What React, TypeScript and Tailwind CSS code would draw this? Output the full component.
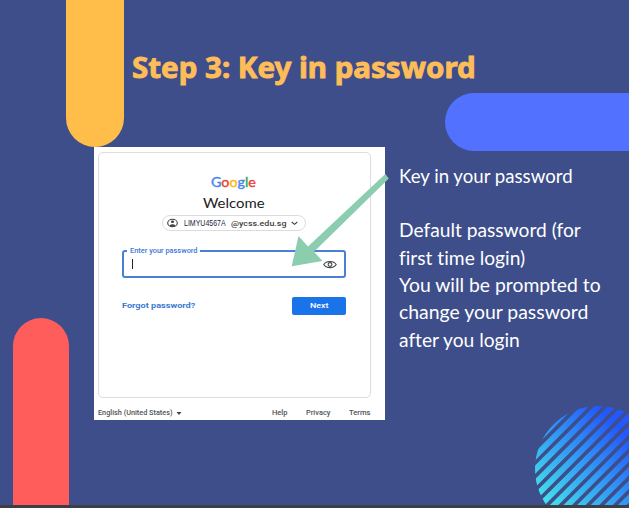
import { useLayoutEffect, useRef, useState } from "react";

type FitProps = { text: string; width: number; className?: string };

// One line of text, stretched horizontally to fill the given width.
function Fit({ text, width, className = "" }: FitProps) {
  const ref = useRef<HTMLSpanElement>(null);
  const [scale, setScale] = useState(1);
  useLayoutEffect(() => {
    if (ref.current) setScale(width / ref.current.offsetWidth);
  }, [width, text]);
  return (
    <span className={`block whitespace-nowrap ${className}`} style={{ width }}>
      <span ref={ref} className="inline-block origin-left" style={{ transform: `scaleX(${scale})` }}>
        {text}
      </span>
    </span>
  );
}

const notes: [string, number][] = [
  ["Key in your password", 174],
  ["", 0],
  ["Default password (for", 182],
  ["first time login)", 126],
  ["You will be prompted to", 202],
  ["change your password", 189],
  ["after you login", 121],
];

function GoogleLogo() {
  return (
    <div className="h-[16px] w-[45px] font-['Lato',sans-serif] text-[14px] leading-[16px] [-webkit-text-stroke:0.4px]">
      <span className="inline-block origin-left scale-x-[1.02] whitespace-nowrap">
        <span className="text-[#4285f4]">G</span>
        <span className="text-[#ea4335]">o</span>
        <span className="text-[#fbbc05]">o</span>
        <span className="text-[#4285f4]">g</span>
        <span className="text-[#34a853]">l</span>
        <span className="text-[#ea4335]">e</span>
      </span>
    </div>
  );
}

function LoginWindow() {
  return (
    <div className="flex h-[273px] w-[291px] flex-col bg-white pl-[4px] pt-[5px] font-['Roboto',sans-serif]">
      <div className="flex h-[246px] w-[273px] flex-col rounded-[5px] border border-[#dcdde0] px-[23px]">
        <div className="mt-[21px] flex justify-center pr-[3px]"><GoogleLogo /></div>
        <div className="mt-[5px] flex justify-center pr-[2px]">
          <Fit text="Welcome" width={62} className="font-['Lato',sans-serif] text-[12.5px] leading-[18px] text-[#202124]" />
        </div>
        <div className="ml-[40px] mt-[2px] flex h-[16px] w-[144px] items-center rounded-full border border-[#dadce0] pl-[4px]">
          <svg className="h-[10px] w-[11px] shrink-0" viewBox="0 0 11 10" fill="none" stroke="#3c4043" strokeWidth="1.1">
            <ellipse cx="5.5" cy="5" rx="4.8" ry="3.8" />
            <ellipse cx="5.5" cy="3.8" rx="1.6" ry="1.3" fill="#3c4043" stroke="none" />
            <path d="M2.3 7.5Q5.5 4.8 8.7 7.5L5.5 8.8Z" fill="#3c4043" stroke="none" />
          </svg>
          <Fit text="LIMYU4567A" width={42} className="ml-[6px] font-['Liberation_Sans',sans-serif] text-[8.5px] leading-[12px] text-[#24243c]" />
          <Fit text="@ycss.edu.sg" width={56} className="ml-[5px] pt-px text-[7px] font-medium leading-[12px] text-[#3c4043]" />
          <svg className="ml-[4px] h-[5px] w-[7px] shrink-0" viewBox="0 0 7 5" fill="none" stroke="#3c4043" strokeWidth="1.1">
            <path d="M.7 1L3.5 3.4L6.3 1" />
          </svg>
        </div>
        <div className="relative mt-[19px] flex h-[28px] w-[224px] items-center justify-between rounded-[3px] border-2 border-[#4780d4] pl-[8px] pr-[7px]">
          <div className="absolute -top-[6px] left-[3px] bg-white px-[3px]">
            <Fit text="Enter your password" width={67} className="text-[6.5px] font-medium leading-[10px] text-[#3b78d8]" />
          </div>
          <div className="h-[10px] w-px bg-[#222]" />
          <svg className="h-[9px] w-[14px]" viewBox="0 0 14 9" fill="none" stroke="#444746" strokeWidth="1.1">
            <path d="M.8 4.5C3.3 .4 10.7 .4 13.2 4.5C10.7 8.6 3.3 8.6 .8 4.5Z" />
            <circle cx="7" cy="4.5" r="1.9" />
          </svg>
        </div>
        <div className="mt-[19px] flex w-[224px] items-center justify-between">
          <Fit text="Forgot password?" width={73} className="text-[7px] font-bold leading-[12px] text-[#3b78d0]" />
          <div className="flex h-[18px] w-[54px] items-center justify-center rounded-[2px] bg-[#1a73e8]">
            <Fit text="Next" width={19} className="text-[7px] font-medium leading-[12px] text-white" />
          </div>
        </div>
      </div>
      <div className="mt-[10px] flex h-[10px] w-[272px] items-center text-[6.5px] font-medium leading-[10px] text-[#505357]">
        <Fit text="English (United States)" width={74} />
        <svg className="ml-[4px] h-[3px] w-[6px]" viewBox="0 0 6 3" fill="#444"><path d="M.5 0H5.5L3 3Z" /></svg>
        <div className="ml-auto flex">
          <Fit text="Help" width={15} />
          <Fit text="Privacy" width={24} className="ml-[19px]" />
          <Fit text="Terms" width={21} className="ml-[19px]" />
        </div>
      </div>
    </div>
  );
}

function StripedCircle() {
  return (
    <svg className="absolute left-[529px] top-[400px] h-[105px] w-[100px]" viewBox="529 400 100 105">
      <defs>
        <linearGradient id="blue" gradientUnits="userSpaceOnUse" x1="552" y1="513" x2="628" y2="437">
          <stop offset="0" stopColor="#43e5e9" />
          <stop offset="1" stopColor="#2358ff" />
        </linearGradient>
        <clipPath id="disc"><circle cx="598" cy="469" r="63" /></clipPath>
      </defs>
      <g clipPath="url(#disc)" fill="url(#blue)">
        {Array.from({ length: 13 }, (_, i) => {
          const s = 973.4 + i * 13.6;
          return <path key={i} d={`M${s - 400} 400H${s - 391.6}L${s - 501.6} 510H${s - 510}Z`} />;
        })}
      </g>
    </svg>
  );
}

export default function App() {
  return (
    <main className="relative h-[508px] w-[629px] overflow-hidden bg-[#3d4e8a]">
      <div className="absolute left-[65.5px] top-0 h-[147px] w-[58px] rounded-b-full bg-[#ffbd4a]" />
      <div className="absolute left-[445px] top-[93px] h-[58px] w-[220px] rounded-full bg-[#5271ff]" />
      <div className="absolute left-[13px] top-[318px] h-[187px] w-[56px] rounded-t-full bg-[#ff5c5c]" />
      <StripedCircle />
      <h1 className="absolute left-[132px] top-[47px]">
        <Fit text="Step 3: Key in password" width={344} className="font-['Noto_Sans','Open_Sans',sans-serif] text-[29px] font-bold leading-[40px] text-[#ffbd59] [-webkit-text-stroke:0.9px]" />
      </h1>
      <div className="absolute left-[94px] top-[147px]"><LoginWindow /></div>
      <div className="absolute left-[399px] top-[161.5px] font-['Lato',sans-serif] text-[19.5px] text-white [font-variant-ligatures:none]">
        {notes.map(([text, width], i) => (
          <div key={i} className="h-[27.4px]">
            {text && <Fit text={text} width={width} className="leading-[27.4px]" />}
          </div>
        ))}
      </div>
      <svg className="absolute left-[285px] top-[170px] h-[100px] w-[110px]" viewBox="285 170 110 100" fill="#8ccdb0">
        <path d="M385.3 174L388.8 178.5L314 251.7L322.5 261L291.7 266.3L298.5 236L308 246.5Z" />
      </svg>
      <div className="absolute bottom-0 left-0 h-[3px] w-full bg-[#3c3f44]" />
    </main>
  );
}
